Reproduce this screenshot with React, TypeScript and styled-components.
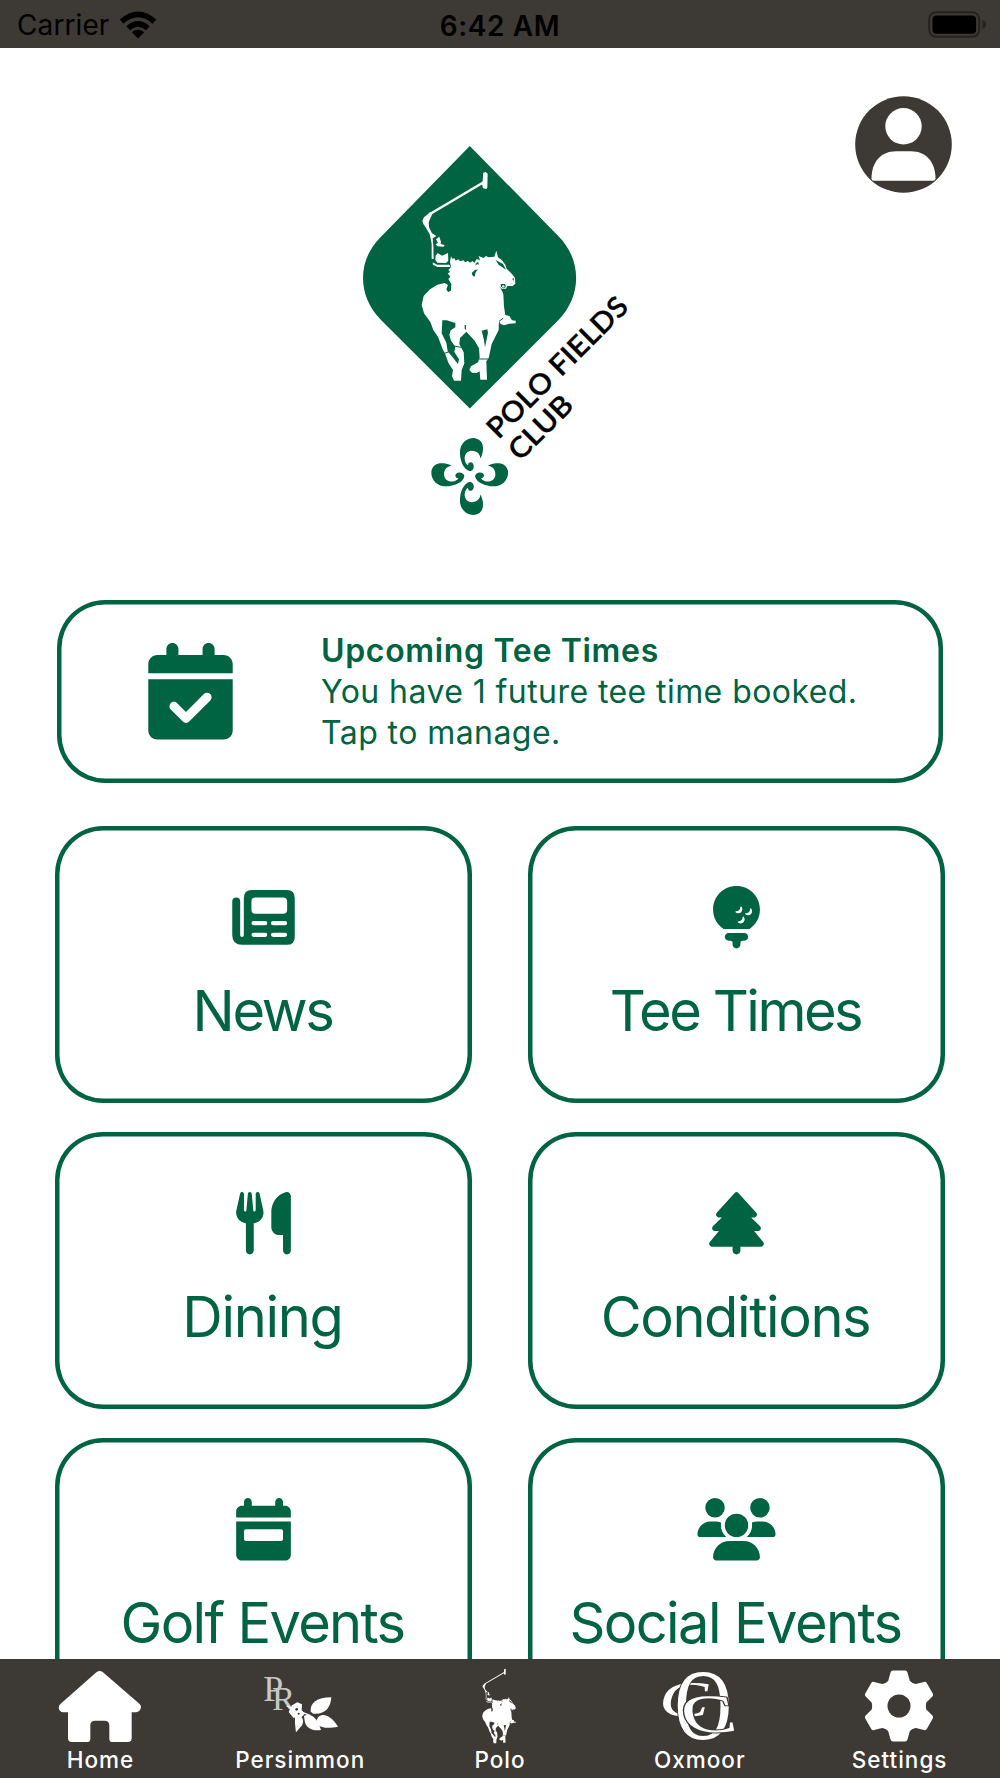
import React from 'react';
import styled, {createGlobalStyle} from 'styled-components';
import {
  FaCalendarCheck,
  FaGolfBallTee,
  FaTree,
  FaUsers,
  FaUtensils,
} from 'react-icons/fa6';

const GREEN = '#006341';
const DARK = '#3d3935';

const GlobalStyle = createGlobalStyle`
  * {
    box-sizing: border-box;
  }
  body {
    margin: 0;
    background: #fff;
    font-family: Inter, 'Liberation Sans', sans-serif;
  }
`;

function Wifi() {
  return (
    <svg width="38" height="28" viewBox="0 0 38 28">
      <path d="M19 27.5L12.8 21.2Q19 16 25.2 21.2Z" />
      <path
        d="M9.2 17.2Q19 8.6 28.8 17.2M2.6 10.6Q19 -3.8 35.4 10.6"
        fill="none"
        stroke="#000"
        strokeWidth="5.4"
      />
    </svg>
  );
}

function Battery() {
  return (
    <svg width="60" height="28" viewBox="0 0 60 28">
      <rect x="1.2" y="1.2" width="50" height="24.6" rx="7" fill="none" stroke="#25221f" strokeWidth="2" />
      <rect x="4.5" y="4.4" width="43.6" height="18.4" rx="4" />
      <path d="M54.5 9q3.6 1.2 3.6 4.5t-3.6 4.5z" fill="#25221f" />
    </svg>
  );
}

function ProfileIcon() {
  return (
    <svg width="97" height="97" viewBox="0 0 97 97">
      <circle cx="48.5" cy="48.5" r="48.3" fill={DARK} />
      <circle cx="48.5" cy="30.3" r="18.2" fill="#fff" />
      <path d="M16.5 82.5C16.5 66 26 55.2 41 55.2H56C71 55.2 80.5 66 80.5 82.5Q80.5 84.7 78 84.7H19Q16.5 84.7 16.5 82.5Z" fill="#fff" />
    </svg>
  );
}

interface RiderProps {
  color: string;
  back: string;
}

// rider and horse, shared by the logo and the Polo tab
function Rider({color, back}: RiderProps) {
  return (
    <g>
      <g fill={color}>
        <path d="M400 98L407 96L413 101L412 143L409 147L399 145L396 132L398 122Z" />
        <path d="M399 124L238 219L242 225L400 131Z" />
        <path d="M240 217L222 232L217 242L220 252L228 263L240 285L245 312L245 356L251 357L250 318L248 295L259 288L246 280L237 262L236 246L248 220Z" />
        <path d="M258 298L268 290L273 306L272 312L284 315L281 320L262 319L257 313L264 308Z" />
        <path d="M257 347L263 339L276 347L294 339L295 362L288 369L262 368L256 360Z" />
        <path d="M248 367L262 374L298 374L301 381L262 381L249 374Z" />
        <path
          d="M303 348L306 356L313 355L317 362L325 358L330 364L340 361L346 367L353 362L360 368L368 363L373 369L380 357L390 361
          L386 348L400 354L408 348L416 352L433 350L439 332L444 352L456 361L466 374L470 386L486 402L495 414L496 431L488 438L472 438
          L468 446L455 446L448 437L460 461L462 500L466 525L478 528L486 541L497 542L497 550L478 551L462 556L452 552L447 544L446 570
          L425 612L416 655L409 664L411 719L391 719L389 694L380 699L366 698L358 690L363 679L384 667L389 652L387 625L374 602L349 575
          L330 594L328 612L341 637L343 670L335 690L333 722L312 722L306 708L309 690L295 668L286 643L278 628L264 590L250 570
          L241 546L222 520L215 495L221 468L240 448L262 434L284 429L294 435L289 448L294 456L303 452L304 432L295 417L301 410
          L293 400L301 396L295 390L303 381L300 366Z"
        />
      </g>
      <g fill={back}>
        <path d="M277 541L290 541L316 549L316 562L302 571L298 584L303 602L316 620L313 636L327 658L324 672L300 642L293 634L289 608L275 580Z" />
        <path d="M395 572L412 568L414 578L405 622L402 600Z" />
        <path d="M437 360L446 374L468 389L459 372Z" />
        <path d="M374 391L384 388L377 397L374 410L368 407L365 399Z" />
        <path d="M377 371L384 365L387 374L381 372L377 378Z" />
        <path d="M452 432H466L467 442L460 445L453 440Z" />
        <path d="M487 416L492 414L490 424Z" />
        <path d="M344 555H348V570L344 566Z" />
      </g>
      <path
        d="M280 641L298 635M311 618L334 622M386 657H418M447 544L459 535"
        fill="none"
        stroke={back}
        strokeWidth="3"
      />
      <circle cx="460" cy="439" r="3.5" fill={color} />
    </g>
  );
}

const PETAL =
  'M1 -16C-19 -20 -31 -50 -29 -79C-25 -104 -4 -117 16 -115C36 -111 43 -95 39 -73Q36 -60 32 -54C31 -66 23 -77 6 -77C-11 -76 -18 -62 -14 -46Q-10 -35 -5 -34C-6 -42 4 -46 9 -40C15 -33 13 -18 1 -16Z';

function Logo() {
  return (
    <svg width="280" height="380" viewBox="360 140 280 380">
      <path
        d="M469.8 146L558.5 236.2C582 260 582 296 558.5 320L469.8 408.6L381 320C357 296 357 260 381 236.7Z"
        fill={GREEN}
      />
      <g transform="translate(350 140) scale(0.33333)">
        <Rider color="#fff" back={GREEN} />
      </g>
      <g transform="translate(469.7 476.5) scale(0.33333)" fill={GREEN}>
        <path d={PETAL} />
        <path d={PETAL} transform="scale(1 -1)" />
        <path d={PETAL} transform="rotate(-90)" />
        <path d={PETAL} transform="scale(-1 1) rotate(-90)" />
      </g>
      <LogoText transform="translate(498.5 440) rotate(-45)" textLength="186" lengthAdjust="spacingAndGlyphs">
        POLO FIELDS
      </LogoText>
      <LogoText transform="translate(520 462) rotate(-45)" textLength="78" lengthAdjust="spacingAndGlyphs">
        CLUB
      </LogoText>
    </svg>
  );
}

function NewsIcon() {
  return (
    <svg viewBox="0 0 189 189" fill="currentColor">
      <path
        fillRule="evenodd"
        d="M59 12H165Q189 12 189 36V154Q189 178 165 178H30Q0 178 0 148V47Q0 35 12 35T24 47V149Q24 154.500 29.500 154.500T35 149V36Q35 12 59 12Z
        M70 35Q58 35 58 47V72Q58 84 70 84H154Q166 84 166 72V47Q166 35 154 35Z
        M65 106Q58 106 58 112.500T65 119H100Q106 119 106 112.500T100 106Z
        M124 106Q117 106 117 112.500T124 119H159Q166 119 166 112.500T159 106Z
        M65 141Q58 141 58 147.500T65 154H100Q106 154 106 147.500T100 141Z
        M124 141Q117 141 117 147.500T124 154H159Q166 154 166 147.500T159 141Z"
      />
    </svg>
  );
}

function EventCalendar() {
  return (
    <svg viewBox="0 0 448 512" fill="currentColor">
      <path d="M96 0c17.700 0 32 14.300 32 32v32h192V32c0-17.700 14.300-32 32-32s32 14.300 32 32v32h16c26.500 0 48 21.500 48 48v48H0v-48c0-26.500 21.500-48 48-48h16V32c0-17.700 14.300-32 32-32z" />
      <path
        fillRule="evenodd"
        d="M0 192h448v272c0 26.500-21.500 48-48 48H48c-26.500 0-48-21.500-48-48zM80 256q-16 0-16 16v64q0 16 16 16h288q16 0 16-16v-64q0-16-16-16z"
      />
    </svg>
  );
}

function HomeIcon() {
  return (
    <svg width="84" height="76" viewBox="174 54 252 228" fill="#fff">
      <path d="M290 66Q299 60 308 66L418 161Q424 166 423 172Q421 186 408 187H395V265Q395 276 384 276H337Q328 276 328 266V226Q328 212 314 212H285Q271 212 271 226V266Q271 276 261 276H215Q204 276 204 265V187H190Q178 186 176 173Q176 166 182 161Z" />
    </svg>
  );
}

function PersimmonIcon() {
  return (
    <svg width="84" height="76" viewBox="774 54 252 228" fill="#fff">
      <Monogram x="790" y="154" fontSize="108" fill="#c9c8c6">P</Monogram>
      <Monogram x="816" y="179" fontSize="104" fill="#c9c8c6">R</Monogram>
      <path d="M860 168L930 196" stroke="#fff" strokeWidth="4" />
      <path d="M866 186L876 166L892 157L906 163L905 180L914 192L902 204L880 203Z" />
      <path d="M932 185C930 158 950 143 994 142C992 174 975 194 940 191Z" />
      <path d="M950 211C955 190 985 183 1014 230C985 236 966 234 953 225Z" />
      <path d="M912 198C930 187 950 199 963 240C938 244 916 233 914 212Z" />
      <path d="M885 203C904 192 915 208 906 226L888 247Q884 220 885 203Z" />
      <circle cx="890" cy="178" r="4" fill={DARK} />
      <circle cx="896" cy="191" r="3" fill={DARK} />
    </svg>
  );
}

function PoloIcon() {
  return (
    <svg width="34" height="76" viewBox="213 94 286 631">
      <Rider color="#fff" back={DARK} />
    </svg>
  );
}

function OxmoorIcon() {
  return (
    <svg width="76" height="76" viewBox="0 0 76 76" fill="#fff">
      <Monogram transform="translate(-4 48) scale(1.5 1) skewX(-8)" fontSize="50">C</Monogram>
      <Monogram transform="translate(13.500 71.500) scale(0.78 1)" fontSize="102" outlined>O</Monogram>
      <Monogram transform="translate(24 64) scale(1.5 1) skewX(8)" fontSize="54" outlined>C</Monogram>
    </svg>
  );
}

function SettingsIcon() {
  return (
    <svg width="76" height="76" viewBox="-38 -38 76 76">
      <circle r="26.5" fill="#fff" />
      {[0, 60, 120, 180, 240, 300].map((angle) => (
        <path
          key={angle}
          transform={`rotate(${angle})`}
          d="M-6 -33H6L8.5 -24L15 -18H-15L-8.5 -24Z"
          fill="#fff"
          stroke="#fff"
          strokeWidth="5"
          strokeLinejoin="round"
        />
      ))}
      <circle r="11.5" fill={DARK} />
    </svg>
  );
}

const menus = [
  {title: 'News', icon: <NewsIcon />, spacing: -2.3},
  {title: 'Tee Times', icon: <FaGolfBallTee />, spacing: -2.5},
  {title: 'Dining', icon: <FaUtensils />, spacing: -1.3},
  {title: 'Conditions', icon: <FaTree />, spacing: -1.4},
  {title: 'Golf Events', icon: <EventCalendar />, spacing: -1.7},
  {title: 'Social Events', icon: <FaUsers />, spacing: -1.6},
];

const tabs = [
  {title: 'Home', icon: <HomeIcon />},
  {title: 'Persimmon', icon: <PersimmonIcon />},
  {title: 'Polo', icon: <PoloIcon />},
  {title: 'Oxmoor', icon: <OxmoorIcon />},
  {title: 'Settings', icon: <SettingsIcon />},
];

export default function App() {
  return (
    <Screen>
      <GlobalStyle />
      <StatusBar>
        <Carrier>
          Carrier
          <Wifi />
        </Carrier>
        <Clock>6:42 AM</Clock>
        <Battery />
      </StatusBar>
      <Content>
        <Header>
          <LogoWrapper>
            <Logo />
          </LogoWrapper>
          <ProfileButton>
            <ProfileIcon />
          </ProfileButton>
        </Header>
        <TeeTimeBanner>
          <BannerIcon>
            <FaCalendarCheck />
          </BannerIcon>
          <BannerBody>
            <BannerTitle>Upcoming Tee Times</BannerTitle>
            <BannerText>You have 1 future tee time booked.</BannerText>
            <BannerText>Tap to manage.</BannerText>
          </BannerBody>
        </TeeTimeBanner>
        <MenuGrid>
          {menus.map(({title, icon, spacing}) => (
            <MenuCard key={title}>
              {icon}
              <MenuTitle $spacing={spacing}>{title}</MenuTitle>
            </MenuCard>
          ))}
        </MenuGrid>
      </Content>
      <TabBar>
        {tabs.map(({title, icon}) => (
          <Tab key={title}>
            {icon}
            <TabTitle>{title}</TabTitle>
          </Tab>
        ))}
      </TabBar>
    </Screen>
  );
}

const Screen = styled.div`
  width: 1000px;
  height: 1778px;
  display: flex;
  flex-direction: column;
  overflow: hidden;
  background: #fff;
`;

const StatusBar = styled.div`
  height: 48px;
  flex-shrink: 0;
  padding: 2px 12px 0;
  display: grid;
  grid-template-columns: 1fr auto 1fr;
  align-items: center;
  background: ${DARK};
  color: #000;
  font-size: 28px;

  > svg {
    justify-self: end;
  }
`;

const Carrier = styled.div`
  padding-left: 5px;
  display: flex;
  align-items: center;
  gap: 10px;
  letter-spacing: 0.1px;
`;

const Clock = styled.div`
  padding-top: 1px;
  font-weight: 600;
  letter-spacing: 0.6px;
`;

const Content = styled.div`
  flex: 1;
  min-height: 0;
  overflow: hidden;
`;

const Header = styled.div`
  height: 552px;
  display: grid;
  grid-template-columns: 360px 280px 1fr;
`;

const LogoWrapper = styled.div`
  grid-column: 2;
  padding-top: 92px;
`;

const ProfileButton = styled.div`
  justify-self: end;
  padding: 48px 48px 0 0;
`;

const LogoText = styled.text`
  font-family: Lato, sans-serif;
  font-size: 28.5px;
  font-weight: 600;
  fill: #000;
  stroke: #000;
  stroke-width: 0.3px;
`;

const Monogram = styled.text.withConfig({
  shouldForwardProp: (prop) => prop !== 'outlined',
})<{outlined?: boolean}>`
  font-family: 'Liberation Serif', serif;
  paint-order: stroke;
  stroke: ${(props) => (props.outlined ? DARK : 'none')};
  stroke-width: 2px;
`;

const TeeTimeBanner = styled.div`
  margin: 0 57px;
  height: 183px;
  display: flex;
  align-items: center;
  border-radius: 48px;
  box-shadow: inset 0 0 0 4.5px ${GREEN};
  color: ${GREEN};
  font-size: 32px;
  line-height: 40.8px;
`;

const BannerIcon = styled.div`
  width: 264px;
  padding-left: 85px;

  svg {
    display: block;
    width: 97px;
    height: 96.5px;
  }
`;

const BannerBody = styled.div`
  padding-top: 2px;
`;

const BannerTitle = styled.div`
  font-weight: 600;
  letter-spacing: 0.67px;
`;

const BannerText = styled.div`
  letter-spacing: 0.43px;
  white-space: nowrap;
`;

const MenuGrid = styled.div`
  margin: 43px 55px 0;
  display: grid;
  grid-template-columns: 417px 417px;
  justify-content: space-between;
  row-gap: 29px;
`;

const MenuCard = styled.div`
  height: 277px;
  padding-top: 60px;
  display: flex;
  flex-direction: column;
  align-items: center;
  border-radius: 48px;
  box-shadow: inset 0 0 0 4.5px ${GREEN};
  color: ${GREEN};

  svg {
    width: 79px;
    height: 62.5px;
    flex-shrink: 0;
  }
`;

const MenuTitle = styled.div<{$spacing: number}>`
  margin-top: 28px;
  padding-right: 2px;
  font-size: 56px;
  line-height: 68px;
  letter-spacing: ${(props) => props.$spacing}px;
  white-space: nowrap;
`;

const TabBar = styled.div`
  height: 119px;
  flex-shrink: 0;
  padding-top: 9px;
  display: grid;
  grid-template-columns: repeat(5, 1fr);
  padding-right: 1px;
  background: ${DARK};
`;

const Tab = styled.div`
  display: flex;
  flex-direction: column;
  align-items: center;

  svg {
    overflow: visible;
  }
`;

const TabTitle = styled.div`
  margin-top: 3px;
  padding-left: 1px;
  color: #fff;
  font-size: 22.5px;
  font-weight: 500;
  line-height: 26px;
  letter-spacing: 1px;
`;
